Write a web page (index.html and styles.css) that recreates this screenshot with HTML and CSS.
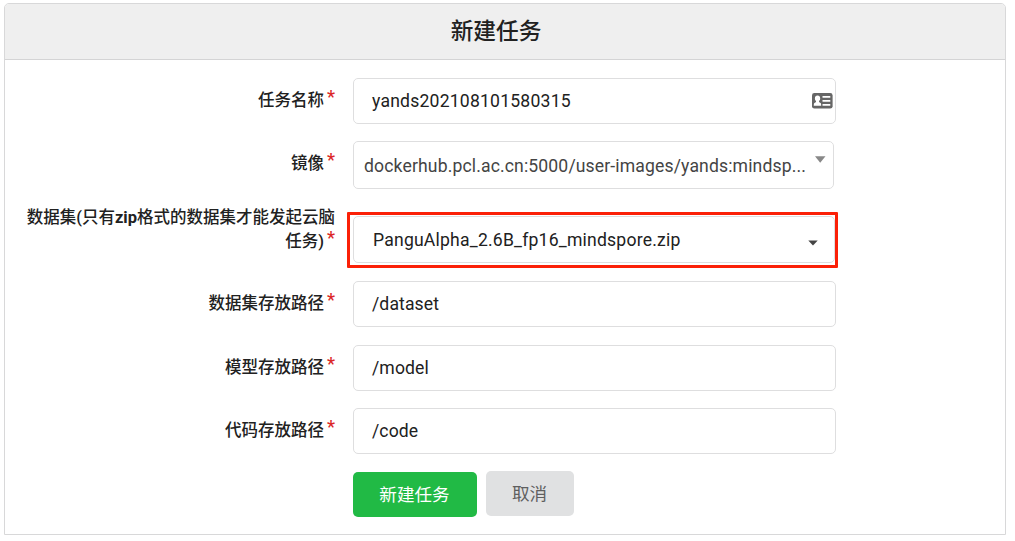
FILE: index.html
```html
<!DOCTYPE html>
<html lang="zh-CN">
<head>
<meta charset="utf-8">
<title>新建任务</title>
<link rel="stylesheet" href="styles.css">
</head>
<body>
<main class="card">
  <h1 class="card-title">新建任务</h1>
  <form class="form">
    <div class="row">
      <div class="label">任务名称<span class="req">*</span></div>
      <div class="field"><span class="t-name">yands202108101580315</span>
        <svg class="id-icon" width="21" height="16" viewBox="0 0 21 16"><rect x="0" y="0" width="20.6" height="15.6" rx="2.4" fill="#666"/><path d="M5.5 2.5c1.8 0 2.7 1.2 2.7 2.8 0 1.3-.5 2.2-1.2 2.8v1l1.500 1c.5.4.7 1 .7 2.7H1.800c0-1.700.2-2.300.7-2.700l1.500-1v-1C3.300 7.500 2.900 6.600 2.900 5.300c0-1.600.9-2.800 2.600-2.800zM10.500 3h7.800v1.800h-7.800zM10.500 7h7.800v1.800h-7.800zM10.500 11h7.800v1.800h-7.800z" fill="#fff"/></svg>
      </div>
    </div>
    <div class="row row-image">
      <div class="label">镜像<span class="req">*</span></div>
      <div class="field select"><span class="t-image">dockerhub.pcl.ac.cn:5000/user-images/yands:mindsp...</span>
        <svg class="arrow" width="11" height="7" viewBox="0 0 11 7"><path d="M0 .3h10.500L5.200 6.700z" fill="#888"/></svg>
      </div>
    </div>
    <div class="row row-data">
      <div class="label label-long">数据集(只有<b>zip</b>格式的数据集才能发起云脑<br>任务)<span class="req">*</span></div>
      <div class="highlight">
        <div class="field dropdown"><span class="t-zip">PanguAlpha_2.6B_fp16_mindspore.zip</span>
          <svg class="caret" width="10" height="6" viewBox="0 0 10 6"><path d="M.3.400h9.400L5 5.400z" fill="#444"/></svg>
        </div>
      </div>
    </div>
    <div class="row">
      <div class="label">数据集存放路径<span class="req">*</span></div>
      <div class="field"><span>/dataset</span></div>
    </div>
    <div class="row">
      <div class="label">模型存放路径<span class="req">*</span></div>
      <div class="field"><span>/model</span></div>
    </div>
    <div class="row">
      <div class="label">代码存放路径<span class="req">*</span></div>
      <div class="field"><span>/code</span></div>
    </div>
    <div class="actions">
      <button type="button" class="btn btn-green">新建任务</button>
      <button type="button" class="btn btn-grey">取消</button>
    </div>
  </form>
</main>
</body>
</html>
```
FILE: styles.css
```css
* { box-sizing: border-box; }
body {
  margin: 0;
  padding: 3px 9px 6px 4px;
  background: #fff;
  color: #212121;
  font-family: Roboto, "Noto Sans CJK SC", sans-serif;
}
.card {
  height: 532px;
  border: 1px solid #d8d8d9;
  border-radius: 5px 5px 0 0;
  overflow: hidden;
}
.card-title {
  margin: 0;
  height: 56px;
  padding-right: 18px;
  border-bottom: 1px solid #d4d4d5;
  background: #efefef;
  font-size: 22.7px;
  font-weight: 500;
  line-height: 55px;
  text-align: center;
}
.form {
  display: flex;
  flex-direction: column;
  gap: 17px;
  padding: 18px 0 0 5px;
}
.row {
  display: grid;
  grid-template-columns: 325px 483px;
  column-gap: 18px;
  height: 46.4px;
}
.label {
  padding-top: 11px;
  font-size: 16.5px;
  font-weight: 500;
  line-height: 24px;
  text-align: right;
  white-space: nowrap;
}
.label b { font-weight: 700; }
.req {
  display: inline-block;
  width: 8px;
  margin-left: 3px;
  color: #db2828;
  font-size: 18px;
  line-height: 14px;
  vertical-align: 3px;
}
.field {
  display: flex;
  align-items: center;
  height: 46px;
  padding: 0 2px 0 18px;
  border: 1px solid #dededf;
  border-radius: 5px;
  background: #fff;
  font-size: 17.6px;
  letter-spacing: .1px;
  white-space: nowrap;
}
.t-name { letter-spacing: .2px; }
.t-image { letter-spacing: .13px; }
.t-zip { letter-spacing: .2px; }
.id-icon { margin-left: auto; }
.row-image { height: 48px; }
.select {
  width: 481px;
  height: 48px;
  padding: 2px 7px 0 10px;
  color: #444;
}
.arrow { margin: -13px 0 0 auto; }
.row-data { height: 58px; }
.row-data .label-long { padding-top: 0; }
.highlight {
  width: 491px;
  height: 56px;
  margin: 6px 0 0 -6px;
  padding: 1px 0 0 3px;
  border: 3px solid #fb2007;
  border-radius: 1px;
}
.dropdown {
  width: 482px;
  height: 47px;
  padding: 1px 16px 0 19px;
}
.caret { margin: 5px 0 0 auto; }
.actions {
  display: flex;
  gap: 9px;
  margin-top: -1px;
  padding-left: 343px;
}
.btn {
  height: 45px;
  padding: 0 1px 2px 0;
  border: 0;
  border-radius: 5px;
  font-family: inherit;
  font-size: 17.6px;
}
.btn-green {
  width: 124px;
  margin-top: 1px;
  background: #21ba45;
  color: #fff;
}
.btn-grey {
  width: 88px;
  background: #e0e1e2;
  color: #5f5f5f;
}
```
